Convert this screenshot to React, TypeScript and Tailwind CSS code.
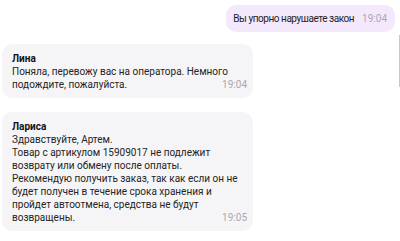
const incoming = [
  {
    name: "Лина",
    lines: ["Поняла, перевожу вас на оператора. Немного", "подождите, пожалуйста."],
    time: "19:04",
  },
  {
    name: "Лариса",
    lines: [
      "Здравствуйте, Артем.",
      "Товар с артикулом 15909017 не подлежит",
      "возврату или обмену после оплаты.",
      "Рекомендую получить заказ, так как если он не",
      "будет получен в течение срока хранения и",
      "пройдет автоотмена, средства не будут",
      "возвращены.",
    ],
    time: "19:05",
  },
];

const App = () => {
  return (
    <div className="relative w-[400px] h-[241px] overflow-hidden bg-white font-['Roboto',Arial,sans-serif] text-[10px] leading-[13px] text-[#242424]">
      {/* scrollbar */}
      <div className="absolute right-0 top-[35px] w-px h-[52px] bg-[#c8c8cc]" />

      <div className="flex flex-col pt-[5px] pl-[2px] pr-[5px]">
        {/* Outgoing */}
        <div className="flex justify-end">
          <div className="flex items-end gap-2 bg-[#f3e8fc] rounded-[10px] pl-[7px] pr-2 py-[7px] whitespace-nowrap">
            <span className="tracking-[-0.45px]">Вы упорно нарушаете закон</span>
            <span className="text-[#a8a8b0]">19:04</span>
          </div>
        </div>

        {/* Incoming */}
        {incoming.map((m, i) => (
          <div
            key={m.name}
            className={`w-[251px] bg-[#f5f5f7] rounded-[10px] pl-[10px] pr-[6px] py-[7.5px] whitespace-nowrap ${i === 0 ? "mt-3" : "mt-[14px]"}`}
          >
            <div className="font-bold text-[#111]">{m.name}</div>
            <div className="flex items-end">
              <div className="flex-1 min-w-0">
                {m.lines.map((l) => (
                  <div key={l}>{l}</div>
                ))}
              </div>
              <span className="shrink-0 text-[#a8a8b0]">{m.time}</span>
            </div>
          </div>
        ))}
      </div>
    </div>
  );
};

export default App;
